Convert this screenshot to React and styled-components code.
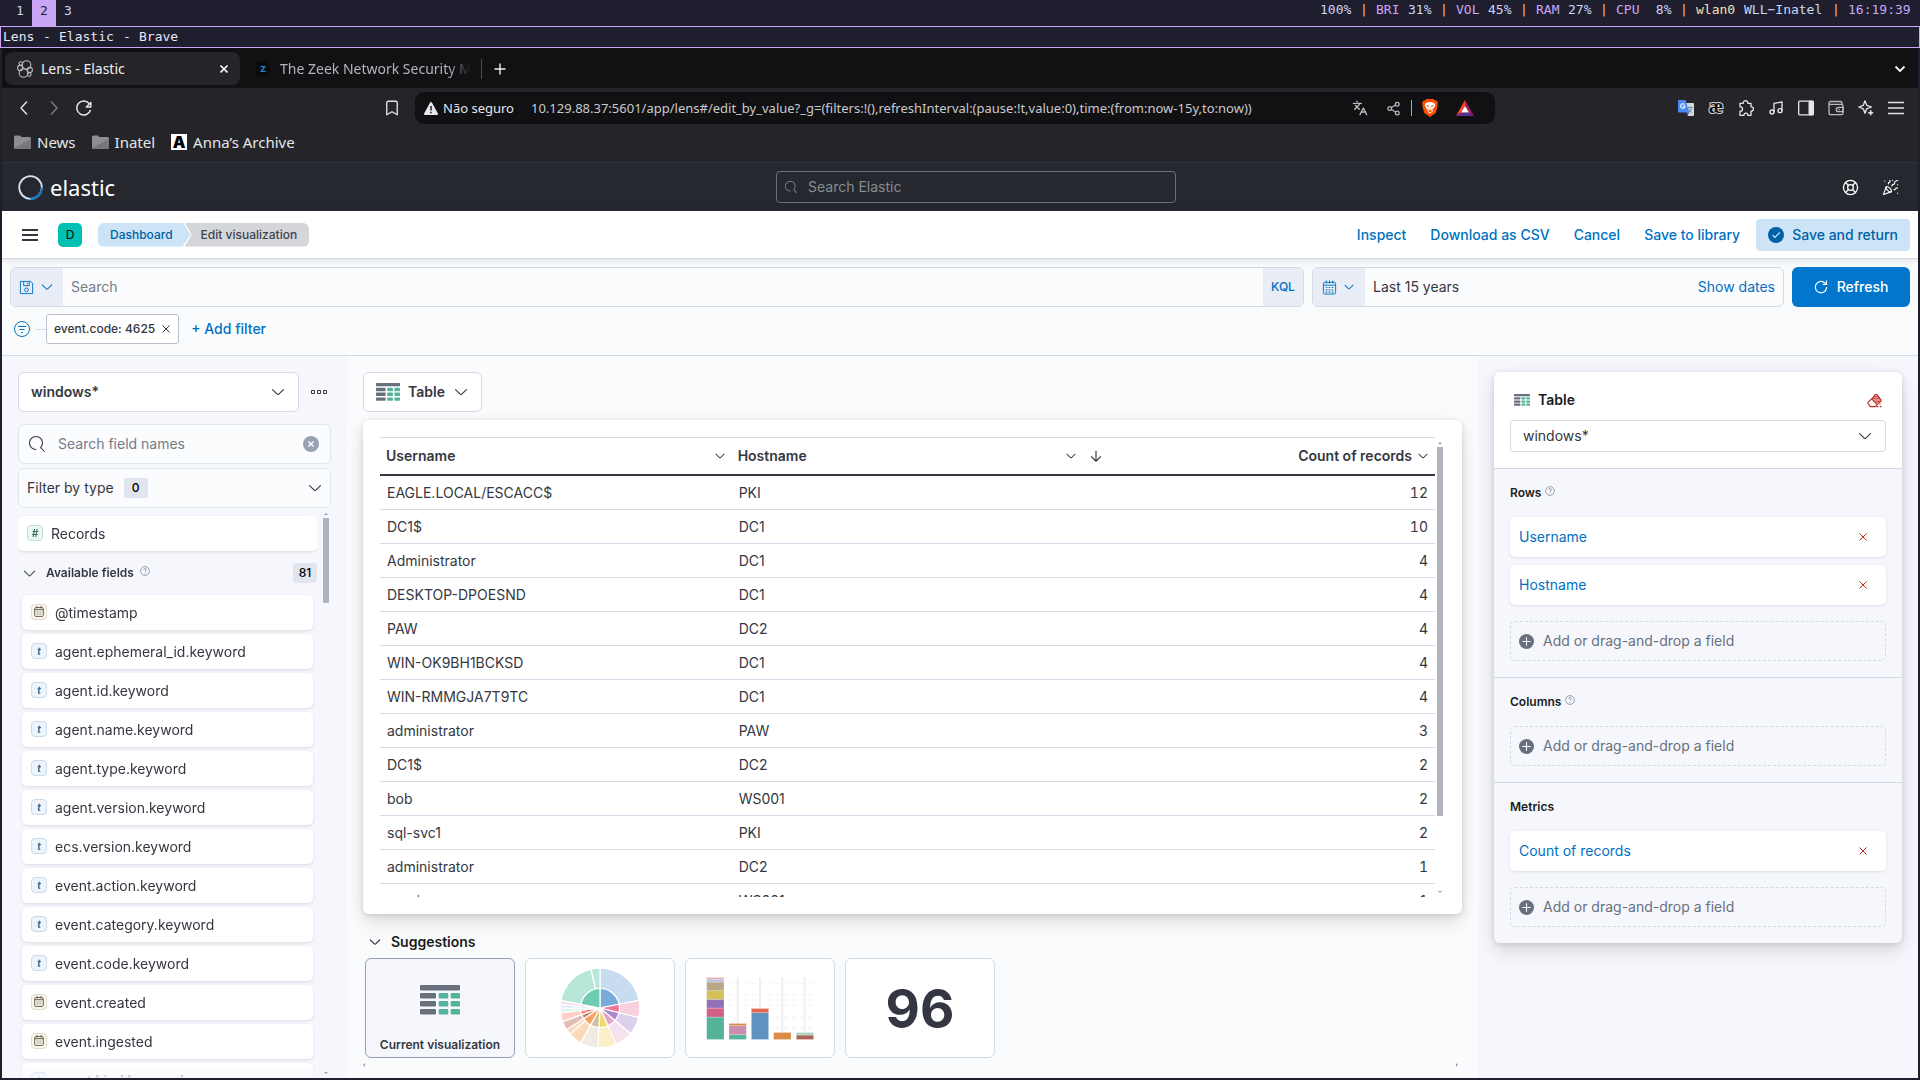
import React from "react";
import styled, { createGlobalStyle } from "styled-components";
import { Languages, Share2, Music, LifeBuoy, PartyPopper, Bookmark } from "lucide-react";

const UI = `"Inter", "Liberation Sans", sans-serif`;
const CHROME = `"Noto Sans", "Open Sans", sans-serif`;
const MONO = `"DejaVu Sans Mono", "Liberation Mono", monospace`;

const c = {
  night: "#1e1e2e",
  mauve: "#cba6f7",
  strip: "#111113",
  chrome: "#252529",
  header: "#25282f",
  ink: "#343741",
  strong: "#1a1c21",
  subdued: "#69707d",
  line: "#d3dae6",
  primary: "#0071c2",
  page: "#fafbfd",
  panel: "#f5f7fc",
  prepend: "#e9edf5",
  danger: "#bd271e",
};

const Global = createGlobalStyle`
  * { box-sizing: border-box; }
  body { margin: 0; background: ${c.night}; }
  button, input, select { font: inherit; color: inherit; margin: 0; }
  button { background: none; border: 0; padding: 0; cursor: pointer; white-space: nowrap; }
  svg { display: block; flex: none; }
  a { text-decoration: none; color: inherit; }
`;

/* ---------- desktop ---------- */
const Desktop = styled.div`
  display: flex;
  flex-direction: column;
  height: 100vh;
  overflow: hidden;
  background: ${c.night};
`;
const StatusBar = styled.div`
  display: flex;
  justify-content: space-between;
  flex: none;
  height: 26px;
  padding: 0 8px;
  font: 13px/20px ${MONO};
  color: #cdd6f4;
`;
const Workspaces = styled.nav`
  display: flex;
`;
const Workspace = styled.button`
  width: 24px;
  height: 26px;
  padding-bottom: 5px;
  background: ${(p) => (p.$active ? c.mauve : "transparent")};
  color: ${(p) => (p.$active ? c.night : "#cdd6f4")};
`;
const Stats = styled.div`
  display: flex;
  gap: 8px;
  white-space: pre;
`;
const tones = { text: "#cdd6f4", light: "#e8e8f4", key: c.mauve, bar: "#fab387", net: "#f9e2af" };
const Stat = styled.span`
  width: ${(p) => p.$chars * 8}px;
  color: ${(p) => tones[p.$tone]};
`;
const TitleBar = styled.div`
  flex: none;
  display: flex;
  gap: 8px;
  height: 22px;
  padding: 0 2px;
  border: 1px solid ${c.mauve};
  font: 13px/20px ${MONO};
`;
const Browser = styled.div`
  flex: 1;
  min-height: 0;
  margin: 0 2px 2px;
  display: flex;
  flex-direction: column;
`;

/* ---------- browser chrome ---------- */
const TabStrip = styled.div`
  flex: none;
  display: flex;
  align-items: center;
  height: 40px;
  padding: 1px 10px 0 3px;
  background: ${c.strip};
  color: #f0f0f2;
  font: 14px/20px ${CHROME};
`;
const Tab = styled.div`
  display: flex;
  align-items: center;
  gap: ${(p) => (p.$active ? 8 : 10)}px;
  width: ${(p) => (p.$active ? 235 : 241)}px;
  height: 33px;
  padding: ${(p) => (p.$active ? "0 12px" : "0 10px 0 16px")};
  border-radius: 8px;
  background: ${(p) => (p.$active ? c.chrome : "transparent")};
  color: ${(p) => (p.$active ? "#f0f0f2" : "#b4b4ba")};
`;
const TabText = styled.span`
  flex: 1;
  min-width: 0;
  overflow: hidden;
  white-space: nowrap;
  mask-image: ${(p) => (p.$fade ? "linear-gradient(90deg,#000 88%,transparent 100%)" : "none")};
`;
const TabRule = styled.span`
  width: 1px;
  height: 20px;
  background: #4a4a50;
  margin-right: 12px;
`;
const Push = styled.span`
  flex: 1;
`;
const Toolbar = styled.div`
  flex: none;
  display: grid;
  grid-template-columns: 413px minmax(0, 1fr) 423px;
  align-items: center;
  height: 40px;
  background: ${c.chrome};
  color: #e6e6ea;
`;
const NavGroup = styled.div`
  display: flex;
  align-items: center;
  gap: 14px;
  padding: 0 14px;
`;
const NavButton = styled.button`
  opacity: ${(p) => (p.$dim ? 0.45 : 1)};
`;
const AddressBar = styled.div`
  display: flex;
  align-items: center;
  height: 32px;
  padding: 0 21px 0 9px;
  border-radius: 9px;
  background: ${c.strip};
  font: 13px/20px ${CHROME};
`;
const Insecure = styled.span`
  padding: 0 17px 0 5px;
  white-space: nowrap;
`;
const Address = styled.input`
  flex: 1;
  min-width: 0;
  border: 0;
  padding: 0;
  background: none;
  outline: none;
  color: #c9c9ce;
`;
const AddressIcons = styled.div`
  display: flex;
  align-items: center;
  gap: 18px;
`;
const AddressRule = styled.span`
  width: 1px;
  height: 16px;
  background: #aaaaae;
  margin: 0 -8px;
`;
const Extensions = styled.div`
  display: flex;
  justify-content: flex-end;
  gap: 14px;
  padding-right: 14px;
`;
const Bookmarks = styled.nav`
  flex: none;
  display: flex;
  align-items: flex-start;
  gap: 16px;
  height: 35px;
  padding: 4px 12px;
  background: ${c.chrome};
  border-bottom: 1px solid #303238;
  color: #e6e6ea;
  font: 15px/20px ${CHROME};
`;
const BookmarkLink = styled.a`
  display: flex;
  align-items: center;
  gap: 6px;
`;
const AnnaMark = styled.span`
  width: 16px;
  height: 16px;
  background: #fff;
  color: #000;
  font: 900 16px/16px ${UI};
  text-align: center;
`;

/* ---------- elastic header ---------- */
const Kibana = styled.div`
  flex: 1;
  min-height: 0;
  display: flex;
  flex-direction: column;
  background: ${c.page};
  color: ${c.ink};
  font: 14px/20px ${UI};
`;
const Header = styled.header`
  flex: none;
  display: flex;
  align-items: center;
  justify-content: space-between;
  height: 48px;
  padding: 0 8px;
  background: ${c.header};
`;
const Brand = styled.a`
  display: flex;
  align-items: center;
  gap: 7px;
  width: 112px;
  padding-left: 8px;
  color: #fff;
  font: 22px/28px ${CHROME};
`;
const GlobalSearch = styled.label`
  display: flex;
  align-items: center;
  gap: 11px;
  width: 400px;
  height: 32px;
  padding: 0 8px;
  border: 1px solid #6b6e76;
  border-radius: 4px;
  color: #898c93;
`;
const PlainInput = styled.input`
  flex: 1;
  min-width: 0;
  border: 0;
  padding: 0;
  outline: none;
  background: transparent;
  &::placeholder { color: ${(p) => p.$hint || "#757b87"}; opacity: 1; }
`;
const HeaderIcons = styled.div`
  display: flex;
  color: #fff;
`;
const HeaderButton = styled.button`
  display: grid;
  place-items: center;
  width: 40px;
  height: 40px;
`;
const AppBar = styled.div`
  flex: none;
  position: relative;
  display: flex;
  align-items: center;
  height: 48px;
  padding: 0 8px 0 20px;
  background: #fff;
  border-bottom: 1px solid ${c.line};
  box-shadow: 0 1px 8px rgba(0, 0, 0, 0.13);
`;
const Space = styled.div`
  display: grid;
  place-items: center;
  width: 24px;
  height: 24px;
  margin: 0 16px 0 20px;
  border-radius: 5px;
  background: #00bfb3;
  color: #000;
  font-size: 12px;
`;
const Crumbs = styled.nav`
  display: flex;
  font: 500 12px/24px ${UI};
`;
const Crumb = styled.a`
  height: 24px;
  padding: ${(p) => (p.$last ? "0 12px 0 16px" : "0 18px 0 12px")};
  margin-left: ${(p) => (p.$last ? "-6px" : "0")};
  border-radius: ${(p) => (p.$last ? "0 6px 6px 0" : "6px 0 0 6px")};
  background: ${(p) => (p.$last ? "#d5d6d9" : "#cce4f5")};
  color: ${(p) => (p.$last ? "#404350" : "#0061a6")};
  clip-path: ${(p) =>
    p.$last ? "polygon(0 0,100% 0,100% 100%,0 100%,7px 50%)" : "polygon(0 0,calc(100% - 8px) 0,100% 50%,calc(100% - 8px) 100%,0 100%)"};
`;
const Actions = styled.div`
  display: flex;
  align-items: center;
  gap: 24px;
  margin-left: auto;
  color: ${c.primary};
  font-weight: 500;
`;
const SaveButton = styled.button`
  display: flex;
  align-items: center;
  gap: 8px;
  height: 32px;
  padding: 0 12px;
  margin-left: -8px;
  border-radius: 4px;
  background: #cce4f5;
  color: #0061a6;
  font-weight: 500;
`;

/* ---------- query bar ---------- */
const QueryArea = styled.section`
  flex: none;
  border-bottom: 1px solid ${c.line};
  padding: 8px 8px 11px;
`;
const QueryRow = styled.div`
  display: flex;
  gap: 8px;
`;
const Group = styled.div`
  display: flex;
  align-items: center;
  flex: ${(p) => (p.$width ? "none" : 1)};
  width: ${(p) => (p.$width ? p.$width + "px" : "auto")};
  height: 40px;
  border: 1px solid ${c.line};
  border-radius: 6px;
  background: #fbfcfd;
  overflow: hidden;
`;
const Prepend = styled.button`
  display: flex;
  align-items: center;
  justify-content: center;
  gap: 6px;
  width: 52px;
  height: 100%;
  padding-right: 2px;
  margin-right: 8px;
  background: ${c.prepend};
  color: ${c.primary};
`;
const Kql = styled.button`
  width: 40px;
  height: 100%;
  background: ${c.prepend};
  color: ${c.primary};
  font-size: 12px;
  font-weight: 500;
`;
const RangeButton = styled.button`
  flex: 1;
  text-align: left;
`;
const LinkButton = styled.button`
  color: ${c.primary};
  font-weight: ${(p) => p.$weight || 400};
  padding: ${(p) => p.$pad || 0};
`;
const Refresh = styled.button`
  display: flex;
  align-items: center;
  justify-content: center;
  gap: 9px;
  width: 118px;
  height: 40px;
  border-radius: 6px;
  background: #0077cc;
  color: #fff;
  font-weight: 500;
`;
const FilterRow = styled.div`
  display: flex;
  align-items: center;
  height: 30px;
  margin-top: 7px;
  padding-left: 4px;
`;
const FilterDash = styled.span`
  width: 10px;
  height: 1px;
  margin-left: 6px;
  background: ${c.line};
`;
const FilterPill = styled.div`
  display: flex;
  align-items: center;
  gap: 7px;
  height: 30px;
  padding: 0 8px 0 7px;
  margin-right: 12px;
  border: 1px solid #b9c0cd;
  border-radius: 3px;
  background: #fff;
  font-size: 12px;
  font-weight: 500;
`;

/* ---------- body ---------- */
const Body = styled.main`
  flex: 1;
  min-height: 0;
  display: grid;
  grid-template-columns: 345px minmax(0, 1fr) 440px;
`;
const Side = styled.aside`
  display: flex;
  flex-direction: column;
  min-height: 0;
  padding: 16px 16px 0;
  background: ${c.panel};
`;
const SourceRow = styled.div`
  display: flex;
  align-items: center;
  gap: 12px;
  margin-bottom: 12px;
`;
const SelectBox = styled.label`
  flex: 1;
  display: flex;
  align-items: center;
  height: ${(p) => p.$height}px;
  padding: 0 12px;
  border: 1px solid ${c.line};
  border-radius: ${(p) => (p.$height > 32 ? 6 : 4)}px;
  background: #fff;
`;
const Select = styled.select`
  flex: 1;
  min-width: 0;
  border: 0;
  outline: none;
  appearance: none;
  background: transparent;
  padding: 0;
  font-weight: ${(p) => (p.$bold ? 600 : 400)};
`;
const FieldSearch = styled.label`
  flex: none;
  display: flex;
  align-items: center;
  gap: 13px;
  height: 40px;
  padding: 0 11px 0 10px;
  border: 1px solid #e1e6f0;
  border-radius: 6px;
  background: #fbfcfd;
`;
const ClearButton = styled.button`
  display: grid;
  place-items: center;
  width: 16px;
  height: 16px;
  border-radius: 50%;
  background: #98a2b3;
  color: #fff;
`;
const TypeFilter = styled.button`
  flex: none;
  display: flex;
  align-items: center;
  gap: 10px;
  height: 40px;
  margin: 4px 0;
  padding: 0 7px 0 8px;
  border: 1px solid #e1e6f0;
  border-radius: 6px;
  background: #fbfcfd;
`;
const Badge = styled.span`
  min-width: 24px;
  height: 20px;
  margin-right: ${(p) => (p.$push ? "auto" : "0")};
  border-radius: 3px;
  background: #e0e5ee;
  color: #000;
  font-size: 12px;
  font-weight: 500;
  text-align: center;
`;
const FieldArea = styled.div`
  flex: 1;
  min-height: 0;
  display: flex;
  gap: 6px;
  overflow: hidden;
  margin-right: 2px;
`;
const FieldScroll = styled.div`
  flex: 1;
  min-width: 0;
  padding-top: 4px;
  overflow: hidden;
  mask-image: linear-gradient(180deg, #000 calc(100% - 12px), rgba(0, 0, 0, 0.2) 100%);
`;
const Rail = styled.div`
  display: flex;
  flex-direction: column;
  align-items: center;
  width: 6px;
  height: 100%;
  padding: ${(p) => p.$pad};
`;
const Thumb = styled.div`
  width: 6px;
  height: ${(p) => p.$size};
  margin: 3px 0 auto;
  background: #afb4be;
`;
const Caret = styled.i`
  border: 2px solid transparent;
  border-${(p) => (p.$dir === "up" ? "bottom" : "top")}-color: #9a9fa9;
  border-${(p) => (p.$dir === "up" ? "top" : "bottom")}-width: 0;
`;
const FieldItem = styled.button`
  display: flex;
  align-items: center;
  gap: 8px;
  width: 100%;
  height: 35px;
  padding: 0 9px;
  border-radius: 5px;
  background: #fff;
  box-shadow: 0 1px 3px rgba(40, 50, 70, 0.14);
`;
const Token = styled.span`
  display: grid;
  place-items: center;
  width: 16px;
  height: 16px;
  margin-bottom: 2px;
  border: 1px solid ${(p) => p.$tone.line};
  border-radius: 4px;
  background: ${(p) => p.$tone.fill};
  color: ${(p) => p.$tone.ink};
  font: italic 700 10px/14px ${UI};
`;
const GroupHead = styled.div`
  display: flex;
  align-items: center;
  height: 44px;
  padding-left: 4px;
  font-size: 12px;
  font-weight: 600;
`;
const HeadLabel = styled.span`
  margin: 0 6px 0 9px;
`;
const Help = styled.span`
  margin-bottom: 5px;
  color: #8b92a0;
`;
const FieldList = styled.div`
  display: flex;
  flex-direction: column;
  gap: 4px;
  padding: 0 4px;
`;
const BadgeEnd = styled.span`
  margin-left: auto;
  display: flex;
`;

/* ---------- workspace ---------- */
const Center = styled.section`
  display: flex;
  flex-direction: column;
  min-height: 0;
  padding: 16px 16px 0;
`;
const ChartSwitch = styled.button`
  align-self: flex-start;
  display: flex;
  align-items: center;
  gap: 8px;
  width: 119px;
  height: 40px;
  padding: 0 12px;
  border: 1px solid ${c.line};
  border-radius: 6px;
  background: #fff;
  font-weight: 600;
`;
const deep = `0 1px 5px rgba(0,0,0,.1), 0 4px 13px rgba(0,0,0,.07), 0 7px 23px rgba(0,0,0,.05), 0 12px 20px rgba(0,0,0,.04)`;
const ChartPanel = styled.div`
  flex: 1;
  min-height: 0;
  display: flex;
  gap: 2px;
  margin-top: 8px;
  padding: 17px 19px 17px 17px;
  border-radius: 6px;
  background: #fff;
  box-shadow: ${deep};
`;
const TableClip = styled.div`
  flex: 1;
  min-width: 0;
  overflow: hidden;
`;
const DataTable = styled.table`
  width: 100%;
  table-layout: fixed;
  border-collapse: separate;
  border-spacing: 0;
`;
const Th = styled.th`
  height: 39px;
  padding: 0 6px;
  border-top: 1px solid ${c.line};
  border-bottom: 2px solid ${c.ink};
  text-align: left;
  font-weight: 600;
`;
const ThInner = styled.div`
  display: flex;
  align-items: center;
  justify-content: space-between;
  gap: 4px;
`;
const ThEnd = styled.span`
  display: flex;
  align-items: center;
  gap: 5px;
`;
const Td = styled.td`
  height: 34px;
  padding: 0 7px;
  border-bottom: 1px solid ${c.line};
  text-align: ${(p) => (p.$num ? "right" : "left")};
  font-feature-settings: ${(p) => (p.$num ? '"tnum" 1' : "normal")};
`;
const SuggestHead = styled.div`
  display: flex;
  align-items: center;
  gap: 9px;
  height: 44px;
  padding: 12px 5px 0;
  color: ${c.strong};
  font-weight: 600;
`;
const Suggestions = styled.div`
  flex: none;
  display: flex;
  gap: 10px;
  padding: 0 2px;
`;
const Card = styled.button`
  display: flex;
  flex-direction: column;
  align-items: center;
  justify-content: ${(p) => (p.$current ? "flex-end" : "center")};
  gap: 20px;
  width: 150px;
  height: 100px;
  padding-bottom: ${(p) => (p.$current ? "2px" : "0")};
  border: 1px solid ${(p) => (p.$current ? "#98a2b3" : c.line)};
  border-radius: 6px;
  background: ${(p) => (p.$current ? c.panel : "#fff")};
  font-size: 12px;
  font-weight: 600;
`;
const Metric = styled.span`
  padding-top: 2px;
  font: 700 53px/60px ${UI};
`;
const HRail = styled.div`
  flex: none;
  display: flex;
  justify-content: space-between;
  height: 20px;
  padding: 5px 4px 0 0;
`;
const SideCaret = styled.i`
  height: 4px;
  border: 2px solid transparent;
  border-${(p) => (p.$dir === "left" ? "right" : "left")}-color: #9a9fa9;
  border-${(p) => p.$dir}-width: 0;
`;

/* ---------- config panel ---------- */
const ConfigWrap = styled.aside`
  padding: 16px;
  background: ${c.panel};
`;
const Config = styled.div`
  border-radius: 6px;
  background: ${c.panel};
  box-shadow: ${deep};
  overflow: hidden;
`;
const ConfigHead = styled.div`
  padding: 16px;
  background: #fff;
`;
const ConfigTitle = styled.div`
  display: flex;
  align-items: center;
  gap: 8px;
  height: 24px;
  padding: 0 4px;
  margin-bottom: 8px;
  color: ${c.strong};
  font-weight: 600;
`;
const Erase = styled.button`
  margin-left: auto;
  color: ${c.danger};
`;
const Layer = styled.section`
  padding: 16px;
  border-top: 1px solid ${c.line};
`;
const LayerLabel = styled.h3`
  display: flex;
  align-items: center;
  gap: 4px;
  height: 16px;
  margin: 0 0 16px;
  color: ${c.strong};
  font-size: 12px;
  font-weight: 600;
`;
const Dimension = styled.div`
  display: flex;
  align-items: center;
  justify-content: space-between;
  height: 40px;
  margin-bottom: ${(p) => (p.$last ? 16 : 8)}px;
  padding: 0 19px 0 9px;
  border-radius: 5px;
  background: #fff;
  box-shadow: 0 1px 3px rgba(40, 50, 70, 0.12);
`;
const RemoveButton = styled.button`
  color: ${c.danger};
`;
const DropZone = styled.button`
  display: flex;
  align-items: center;
  gap: 9px;
  width: 100%;
  height: 40px;
  padding: 0 8px;
  border: 1px dashed ${c.line};
  border-radius: 5px;
  color: ${c.subdued};
`;

/* ---------- icons ---------- */
const Chevron = ({ size = 16 }) => (
  <svg width={size} height={size} viewBox="0 0 16 16" fill="currentColor">
    <path d="M13.069 5.157 8.384 9.768a.546.546 0 0 1-.768 0L2.93 5.158a.552.552 0 0 0-.771 0 .53.53 0 0 0 0 .759l4.684 4.61a1.65 1.65 0 0 0 2.312 0l4.684-4.61a.53.53 0 0 0 0-.76.552.552 0 0 0-.771 0Z" />
  </svg>
);
const Lens = ({ size = 16 }) => (
  <svg width={size} height={size} viewBox="0 0 16 16" fill="currentColor">
    <path d="M11.271 11.978l3.872 3.873a.502.502 0 0 0 .708 0 .502.502 0 0 0 0-.708l-3.565-3.564c2.38-2.747 2.267-6.923-.342-9.532-2.73-2.73-7.17-2.73-9.898 0-2.728 2.729-2.728 7.17 0 9.9a6.955 6.955 0 0 0 4.949 2.05.5.5 0 0 0 0-1 5.96 5.96 0 0 1-4.242-1.757 6.01 6.01 0 0 1 0-8.486 6.004 6.004 0 0 1 8.484 0 6.01 6.01 0 0 1 0 8.486.5.5 0 0 0 .034.738z" />
  </svg>
);
const Line = ({ size = 16, w = 1, d, box = 16 }) => (
  <svg width={size} height={size} viewBox={`0 0 ${box} ${box}`} fill="none" stroke="currentColor" strokeWidth={w} strokeLinejoin="round">
    <path d={d} />
  </svg>
);
const Cross = ({ size = 8, w = 1 }) => <Line size={size} box={8} w={w} d="M.5.5l7 7M7.5.5l-7 7" />;
const Question = () => (
  <svg width="10" height="10" viewBox="0 0 16 16" fill="none" stroke="currentColor" strokeWidth="1.4">
    <circle cx="8" cy="8" r="7" />
    <path d="M5.8 6.2c0-1.3 1-2.1 2.2-2.1s2.2.8 2.2 2c0 1.7-2.2 1.7-2.2 3.4M8 11v1.4" />
  </svg>
);
const TableIcon = ({ width }) => (
  <svg width={width} height={(width * 3) / 4} viewBox="0 0 30 22.5">
    <rect width="30" height="4.2" rx=".8" fill="#69707d" />
    {[6, 12, 18].map((y) => (
      <g key={y}>
        <rect y={y} width="12" height="4.2" rx=".8" fill="#69707d" />
        <rect x="14" y={y} width="7.2" height="4.2" rx=".8" fill="#54b399" />
        <rect x="23" y={y} width="7" height="4.2" rx=".8" fill="#54b399" />
      </g>
    ))}
  </svg>
);
const Plus = () => (
  <svg width="15" height="15" viewBox="0 0 16 16">
    <circle cx="8" cy="8" r="8" fill="#69707d" />
    <path d="M8 3.5v9M3.5 8h9" stroke="#fff" strokeWidth="1.1" />
  </svg>
);
const Calendar = ({ size }) => (
  <svg width={size} height={size} viewBox="0 0 16 16" fill="none" stroke="currentColor">
    <rect x="1.5" y="2.5" width="13" height="12.5" rx="1.5" />
    <path d="M1.5 5.5h13M4.5.5v3M8 .5v3M11.5.5v3" />
    <path d="M4 8h8M4 10.5h8M4 13h8" strokeWidth="1.3" strokeDasharray="1.6 1.6" />
  </svg>
);
const DateToken = () => (
  <svg width="10" height="11" viewBox="0 0 10 11" fill="none" stroke="currentColor">
    <rect x=".7" y="1.6" width="8.6" height="8.8" rx="1" />
    <path d="M.7 3.7h8.6M3 0v2.4M7 0v2.4" />
    <path d="M3.2 5v4M5 5v4M6.8 5v4" strokeWidth=".7" opacity=".6" />
  </svg>
);
const EraserIcon = () => (
  <svg width="15" height="15" viewBox="0 0 16 16" fill="none" stroke="currentColor" strokeWidth="1.2" strokeLinejoin="round">
    <path d="M7 4.500 1.500 9.500a1.500 1.500 0 0 0-.2 2L3.500 14.500h5l6-5.300a1.500 1.500 0 0 0 .1-2.200L10.500 1.800a1.500 1.500 0 0 0-2 .1L5.500 6.800l5.300 5.500" />
    <path d="M7.500 3.500h4.500M6.500 5.500h7.500M7 7.500h8M8.500 9.500h5.500" />
    <path d="M10 14.500h2M13.500 14.500h2M13.500 12h1" />
  </svg>
);
const PuzzleIcon = () => (
  <Line w={1.3} d="M2 3.300h3.200V3a2.300 2.300 0 1 1 4.600 0v.3H13v3.500h.3a2.200 2.200 0 0 1 0 4.400H13V15.300H9.800V15a1.900 1.900 0 0 0-3.800 0v.3H2v-4.100h.3a2.200 2.200 0 0 0 0-4.400H2z" />
);
const WalletIcon = () => (
  <svg width="16" height="16" viewBox="0 0 16 16" fill="none" stroke="#b9b9be" strokeWidth="1.3">
    <path d="M1 3v10a1.700 1.700 0 0 0 1.700 1.700h10.600A1.700 1.700 0 0 0 15 13V6a1.700 1.700 0 0 0-1.700-1.700H2.500A1.400 1.400 0 0 1 1 3a1.500 1.500 0 0 1 1.500-1.500h10a1.500 1.500 0 0 1 1.500 1.500v1.300" />
    <path d="M15 7.300h-4.500a2 2 0 0 0 0 4.400H15z" />
    <path d="M10.500 9.500h1.200" />
  </svg>
);
const LeoSparkle = () => (
  <svg width="16" height="16" viewBox="0 0 16 16" fill="none" stroke="#e6e6ea" strokeWidth="1.3" strokeLinejoin="round">
    <path d="M7 .8 8.700 5.300 13.500 7 8.700 8.800 7 13.300 5.300 8.800.8 7l4.500-1.700z" />
    <path d="M12.700 10.200v5M10.200 12.700h5" strokeWidth="1.6" />
  </svg>
);
const Folder = () => (
  <svg width="17" height="14" viewBox="0 0 17 14">
    <path d="M0 2a1.500 1.500 0 0 1 1.500-1.500h4.500l1.500 1.500h8a1.500 1.500 0 0 1 1.500 1.500v9a1.500 1.500 0 0 1-1.500 1.500h-14a1.500 1.500 0 0 1-1.500-1.500z" fill="#8d8d92" />
    <path d="M0 13 17 4v8.500a1.500 1.500 0 0 1-1.500 1.500h-14z" fill="#77777c" />
  </svg>
);
const Warning = () => (
  <svg width="14" height="13" viewBox="0 0 14 13">
    <path d="M7 0a1 1 0 0 1 .9.500l6 11A1 1 0 0 1 13 13H1a1 1 0 0 1-.9-1.500l6-11A1 1 0 0 1 7 0z" fill="#e6e6ea" />
    <path d="M7 4v4.500M7 9.700v1.500" stroke="#111113" strokeWidth="1.4" />
  </svg>
);
const Cluster = () => (
  <svg width="16" height="18" viewBox="0 0 16 18" fill="none" stroke="#b9b9be" strokeWidth="1.100">
    <circle cx="9.500" cy="5" r="4.300" />
    <circle cx="6.500" cy="13" r="4.300" />
    <circle cx="3.200" cy="8" r="2.600" />
    <circle cx="12.800" cy="10" r="2.600" />
    <circle cx="3.800" cy="3.600" r="1.800" />
    <circle cx="12.300" cy="14.500" r="1.800" />
  </svg>
);
const ElasticRing = () => (
  <svg width="25" height="25" viewBox="0 0 25 25" fill="none" strokeWidth="1.800">
    <circle cx="12.500" cy="12.500" r="11.300" stroke="#d5e2ee" />
    <path d="M23.800 12.500A11.300 11.300 0 0 1 12.500 23.800" stroke="#0077cc" />
  </svg>
);
const BraveLion = () => (
  <svg width="16" height="18" viewBox="0 0 16 18">
    <path d="M4.500 0h7l1.500 1.600 1.500-.1 1.500 2.300-.6 2 .3 1-2 7.200L8 18l-5.700-4L.3 6.800l.3-1-.6-2 1.500-2.300 1.500.1z" fill="#ff4f00" />
    <path d="M5 3.500 8 3l3 .5 1.900 1.300.3 2-2.200 3.200-1 .4 1 1.600L8 14.800 5 12l1-1.600-1-.4-2.200-3.200.3-2z" fill="#fff" />
    <path d="M4.500 6.300l2.500.9-.8.9zM11.500 6.300 9 7.200l.8.9zM8 8.800v2.400M6 12l2-1 2 1-2 1.200z" fill="#ff4f00" stroke="#ff4f00" strokeWidth=".5" />
  </svg>
);
const BatTriangle = () => (
  <svg width="18" height="16" viewBox="0 0 18 16">
    <path d="M9 0v6L5 12.500 0 16z" fill="#ff4724" />
    <path d="M9 0v6l4 6.500 5 3.500z" fill="#9e1f63" />
    <path d="M0 16l5-3.500h8l5 3.500z" fill="#662d91" />
    <path d="M9 6l4 6.500H5z" fill="#fff" />
  </svg>
);
const GTranslate = () => (
  <svg width="16" height="16" viewBox="0 0 16 16">
    <path d="M6 3h9a1 1 0 0 1 1 1v11a1 1 0 0 1-1 1H10z" fill="#d5d8dc" />
    <path d="M9.500 7.500h5M12 6.500v1M14 7.500c-.5 2-2 3.800-3.500 4.700M10.500 8.500c.8 2 2 3.200 3.500 4" fill="none" stroke="#6c8a9c" />
    <path d="M0 1a1 1 0 0 1 1-1h6.500l3.800 12.500H1a1 1 0 0 1-1-1z" fill="#4a8af4" />
    <path d="M8 12.500h3.300L9.500 16z" fill="#3556b8" />
    <path d="M6.500 4.600A2.200 2.200 0 1 0 7 6.300H4.900" fill="none" stroke="#fff" strokeWidth="1.100" />
  </svg>
);
const AeMark = styled.span`
  width: 16px;
  display: flex;
  justify-content: center;
  color: #111113;
  font: 700 20px/12px "Liberation Serif", serif;
  -webkit-text-stroke: 2px #d8d8dc;
  paint-order: stroke fill;
`;
const SidebarIcon = () => (
  <svg width="16" height="16" viewBox="0 0 16 16" fill="none" stroke="#e6e6ea">
    <rect x=".7" y="1.200" width="14.600" height="13.600" rx="1" strokeWidth="1.300" />
    <path d="M11 1.200h4.300v13.600H11z" fill="#e6e6ea" />
  </svg>
);
const ZeekMark = styled.span`
  width: 14px;
  color: #1a8ac6;
  background: #0a0a0b;
  border-radius: 4px;
  font: 600 11px/15px ${UI};
  text-align: center;
`;

const ring = (r0, r1, a, b) => {
  const p = (r, t) => {
    const k = ((t - 90) * Math.PI) / 180;
    return `${(40 + r * Math.cos(k)).toFixed(2)} ${(40 + r * Math.sin(k)).toFixed(2)}`;
  };
  return `M${p(r0, a)}L${p(r1, a)}A${r1} ${r1} 0 0 1 ${p(r1, b)}L${p(r0, b)}A${r0} ${r0} 0 0 0 ${p(r0, a)}Z`;
};
const innerSlices = [
  [0, 79, "#79aad9"], [79, 104, "#ee789d"], [104, 130, "#a987d1"], [130, 156, "#e4a6c7"], [156, 183, "#f1d86f"],
  [183, 209, "#d2c0a0"], [209, 237, "#f5a35c"], [237, 250, "#c47c6c"], [250, 263, "#ff7e62"], [263, 269, "#a8e6d8"],
  [269, 275, "#b0cfee"], [275, 281, "#f9b6cc"], [281, 360, "#6dccb1"],
];
const outerSlices = [
  [0, 79, "#c7dcef"], [79, 104, "#f9d0de"], [104, 130, "#ddd0ed"], [130, 156, "#f6e2ee"], [156, 183, "#faefc8"],
  [183, 209, "#f1ebe3"], [209, 229, "#fbdabc"], [229, 237, "#fbdabc"], [237, 250, "#e2beb7"], [250, 263, "#ffd0c6"],
  [263, 270, "#dff6f0"], [270, 275, "#d9e8f7"], [275, 281, "#fbdde6"], [281, 347, "#b8e6d9"], [347, 360, "#b8e6d9"],
];
const Pie = () => (
  <svg width="80" height="80" viewBox="0 0 80 80" stroke="#fff" strokeWidth="1.200">
    {outerSlices.map(([a, b, f]) => <path key={a} d={ring(19.5, 39.8, a, b)} fill={f} />)}
    {innerSlices.map(([a, b, f]) => <path key={a} d={ring(0, 19.5, a, b)} fill={f} />)}
  </svg>
);
const barStacks = [
  [530, [[51, 58, "#e8a9c4"], [58, 65, "#a9c5e0"], [65, 91, "#b9a888"], [91, 117, "#d6bf57"], [117, 143, "#9170b8"], [143, 170, "#d36086"], [170, 237, "#54b399"]]],
  [597, [[189, 196, "#da8b45"], [196, 223, "#ca8eae"], [223, 237, "#54b399"]]],
  [664, [[144, 157, "#e7664c"], [157, 237, "#6092c0"]]],
  [731, [[216, 237, "#da8b45"]]],
  [799, [[216, 224, "#a9d6c8"], [224, 237, "#aa6556"]]],
];
const Bars = () => (
  <svg width="108" height="63" viewBox="528 50 324 188">
    {[623, 690, 757, 824].map((x) => <path key={x} d={`M${x} 50V237`} stroke="#eeeff4" strokeWidth="6" />)}
    {[70, 103, 136, 170, 203].map((y) => <path key={y} d={`M594 ${y}H848`} stroke="#f0f1f5" strokeWidth="3" strokeDasharray="12 12" />)}
    {barStacks.map(([x, parts]) =>
      parts.map(([a, b, f]) => <rect key={x + "-" + a} x={x} y={a} width="52" height={b - a} fill={f} stroke="#fff" strokeOpacity=".35" strokeWidth="2" />)
    )}
  </svg>
);

/* ---------- data ---------- */
const stats = [
  ["100%", "text"], ["|", "bar"], ["BRI", "key"], ["31%", "text"], ["|", "bar"], ["VOL", "key"], ["45%", "text"], ["|", "bar"],
  ["RAM", "key"], ["27%", "text"], ["|", "bar"], ["CPU", "key"], [" 8%", "text"], ["|", "bar"], ["wlan0", "net"],
  ["WLL−Inatel", "text"], ["|", "bar"], ["16:19:39", "key"],
];
const fields = [
  ["@timestamp", "date"], ["agent.ephemeral_id.keyword", "text"], ["agent.id.keyword", "text"], ["agent.name.keyword", "text"],
  ["agent.type.keyword", "text"], ["agent.version.keyword", "text"], ["ecs.version.keyword", "text"], ["event.action.keyword", "text"],
  ["event.category.keyword", "text"], ["event.code.keyword", "text"], ["event.created", "date"], ["event.ingested", "date"],
  ["event.kind.keyword", "text"],
];
const tokenTones = {
  date: { fill: "#f8f6f1", line: "#e4dccb", ink: "#6b5f45" },
  text: { fill: "#eef4fa", line: "#c9dbec", ink: "#3f6b94" },
  number: { fill: "#ecf7f4", line: "#bfe2d8", ink: "#387765" },
};
const rows = [
  ["EAGLE.LOCAL/ESCACC$", "PKI", 12], ["DC1$", "DC1", 10], ["Administrator", "DC1", 4], ["DESKTOP-DPOESND", "DC1", 4],
  ["PAW", "DC2", 4], ["WIN-OK9BH1BCKSD", "DC1", 4], ["WIN-RMMGJA7T9TC", "DC1", 4], ["administrator", "PAW", 3],
  ["DC1$", "DC2", 2], ["bob", "WS001", 2], ["sql-svc1", "PKI", 2], ["administrator", "DC2", 1], ["svc-iam", "WS001", 1],
];
const layers = [
  { label: "Rows", help: true, dims: ["Username", "Hostname"] },
  { label: "Columns", help: true, dims: [] },
  { label: "Metrics", help: false, dims: ["Count of records"] },
];

const Field = ({ name, kind }) => (
  <FieldItem>
    <Token $tone={tokenTones[kind]}>{kind === "date" ? <DateToken /> : kind === "text" ? "t" : "#"}</Token>
    {name}
  </FieldItem>
);

export default function App() {
  return (
    <Desktop>
      <Global />
      <StatusBar>
        <Workspaces>
          {[1, 2, 3].map((n) => <Workspace key={n} $active={n === 2}>{n}</Workspace>)}
        </Workspaces>
        <Stats>
          {stats.map(([t, tone], i) => <Stat key={i} $chars={t.length} $tone={tone}>{t}</Stat>)}
        </Stats>
      </StatusBar>
      <TitleBar>
        {["Lens", "-", "Elastic", "-", "Brave"].map((w, i) => <Stat key={i} $chars={w.length} $tone="light">{w}</Stat>)}
      </TitleBar>

      <Browser>
        <TabStrip>
          <Tab $active>
            <Cluster />
            <TabText>Lens - Elastic</TabText>
            <button aria-label="Close tab"><Cross w={1.6} /></button>
          </Tab>
          <Tab>
            <ZeekMark>z</ZeekMark>
            <TabText $fade>The Zeek Network Security M</TabText>
          </Tab>
          <TabRule />
          <button aria-label="New tab"><Line size={12} box={12} w={1.4} d="M6 .5v11M.5 6h11" /></button>
          <Push />
          <button aria-label="Tab list"><Line size={16} w={1.8} d="M3.500 5.500 8 10l4.500-4.500" /></button>
        </TabStrip>
        <Toolbar>
          <NavGroup>
            <NavButton aria-label="Back"><Line w={1.4} d="M11 1.500 5 8l6 6.500" /></NavButton>
            <NavButton $dim aria-label="Forward"><Line w={1.4} d="M5 1.500 11 8l-6 6.500" /></NavButton>
            <NavButton aria-label="Reload"><Line w={1.5} d="M14.500 10A7 7 0 1 1 13.500 4M14.800 2.500v4.500h-4.500z" /></NavButton>
            <Push />
            <NavButton aria-label="Bookmark"><Bookmark size={18} strokeWidth={1.8} /></NavButton>
          </NavGroup>
          <AddressBar>
            <Warning />
            <Insecure>Não seguro</Insecure>
            <Address aria-label="Address" readOnly value="10.129.88.37:5601/app/lens#/edit_by_value?_g=(filters:!(),refreshInterval:(pause:!t,value:0),time:(from:now-15y,to:now))" />
            <AddressIcons>
              <Languages size={16} color="#b9b9be" />
              <Share2 size={15} color="#b9b9be" />
              <AddressRule />
              <BraveLion />
              <BatTriangle />
            </AddressIcons>
          </AddressBar>
          <Extensions>
            <GTranslate />
            <AeMark>æ</AeMark>
            <PuzzleIcon />
            <Music size={16} />
            <SidebarIcon />
            <WalletIcon />
            <LeoSparkle />
            <Line w={1.4} d="M0 2.500h16M0 8h16M0 13.500h16" />
          </Extensions>
        </Toolbar>
        <Bookmarks>
          <BookmarkLink href="#news"><Folder />News</BookmarkLink>
          <BookmarkLink href="#inatel"><Folder />Inatel</BookmarkLink>
          <BookmarkLink href="#anna"><AnnaMark>A</AnnaMark>Anna’s Archive</BookmarkLink>
        </Bookmarks>

        <Kibana>
          <Header>
            <Brand href="#home"><ElasticRing />elastic</Brand>
            <GlobalSearch>
              <Lens size={12} />
              <PlainInput aria-label="Search Elastic" placeholder="Search Elastic" $hint="#898c93" />
            </GlobalSearch>
            <HeaderIcons>
              <HeaderButton aria-label="Help"><LifeBuoy size={17} strokeWidth={1.8} /></HeaderButton>
              <HeaderButton aria-label="News"><PartyPopper size={17} strokeWidth={1.6} /></HeaderButton>
            </HeaderIcons>
          </Header>
          <AppBar>
            <button aria-label="Menu"><Line w={2} d="M0 3h16M0 8h16M0 13h16" /></button>
            <Space>D</Space>
            <Crumbs>
              <Crumb href="#dashboard">Dashboard</Crumb>
              <Crumb $last>Edit visualization</Crumb>
            </Crumbs>
            <Actions>
              <button>Inspect</button>
              <button>Download as CSV</button>
              <button>Cancel</button>
              <button>Save to library</button>
              <SaveButton>
                <svg width="16" height="16" viewBox="0 0 16 16"><circle cx="8" cy="8" r="8" fill="#0061a6" /><path d="M4.500 8.200 7 10.500l4.700-5" fill="none" stroke="#cce4f5" strokeWidth="1.200" /></svg>
                Save and return
              </SaveButton>
            </Actions>
          </AppBar>

          <QueryArea>
            <QueryRow>
              <Group>
                <Prepend aria-label="Saved queries">
                  <Line size={15} box={16} d="M1.500 1.500h11l2 2v11h-13zM5 1.500v4.500h6v-4.500M9 3v1.500M10 10.500a2 2 0 1 0-4 0 2 2 0 1 0 4 0" />
                  <Chevron size={14} />
                </Prepend>
                <PlainInput aria-label="Search" placeholder="Search" />
                <Kql>KQL</Kql>
              </Group>
              <Group $width={472}>
                <Prepend aria-label="Quick select"><Calendar size={15} /><Chevron size={12} /></Prepend>
                <RangeButton>Last 15 years</RangeButton>
                <LinkButton $pad="0 8px">Show dates</LinkButton>
              </Group>
              <Refresh><Line size={14} box={16} w={1.300} d="M14.500 8A6.500 6.500 0 1 1 12 3l2.200 1.800M14.300.5v4.500H10" />Refresh</Refresh>
            </QueryRow>
            <FilterRow>
              <LinkButton aria-label="Filter options"><Line size={16} d="M15.500 8A7.500 7.500 0 1 1 .5 8a7.500 7.500 0 1 1 15 0M4 5.500h8M5.500 8.500h5M7 11.500h2" /></LinkButton>
              <FilterDash />
              <FilterPill>event.code: 4625 <button aria-label="Remove filter"><Cross /></button></FilterPill>
              <LinkButton $weight={500}>+ Add filter</LinkButton>
            </FilterRow>
          </QueryArea>

          <Body>
            <Side>
              <SourceRow>
                <SelectBox $height={40}>
                  <Select $bold aria-label="Data view"><option>windows*</option></Select>
                  <Chevron />
                </SelectBox>
                <button aria-label="More">
                  <svg width="20" height="16" viewBox="0 0 20 16" fill="none" stroke="currentColor"><path d="M.5 6.500h3v3h-3zM6.500 6.500h3v3h-3zM12.500 6.500h3v3h-3z" /></svg>
                </button>
              </SourceRow>
              <FieldSearch>
                <Lens />
                <PlainInput aria-label="Search field names" placeholder="Search field names" />
                <ClearButton aria-label="Clear"><Cross size={6} w={1.800} /></ClearButton>
              </FieldSearch>
              <TypeFilter>Filter by type <Badge $push>0</Badge><Chevron /></TypeFilter>
              <FieldArea>
                <FieldScroll>
                  <Field name="Records" kind="number" />
                  <GroupHead>
                    <Chevron size={15} />
                    <HeadLabel>Available fields</HeadLabel>
                    <Help><Question /></Help>
                    <BadgeEnd><Badge>81</Badge></BadgeEnd>
                  </GroupHead>
                  <FieldList>
                    {fields.map(([n, k]) => <Field key={n} name={n} kind={k} />)}
                  </FieldList>
                </FieldScroll>
                <Rail $pad="1px 0 4px"><Caret $dir="up" /><Thumb $size="85px" /><Caret $dir="down" /></Rail>
              </FieldArea>
            </Side>

            <Center>
              <ChartSwitch><TableIcon width={24} />Table<Chevron /></ChartSwitch>
              <ChartPanel>
                <TableClip>
                  <DataTable>
                    <thead>
                      <tr>
                        <Th><ThInner>Username<Chevron size={12} /></ThInner></Th>
                        <Th><ThInner>Hostname<Chevron size={12} /></ThInner></Th>
                        <Th>
                          <ThInner>
                            <Line size={14} w={1.3} d="M8 2v12M2.500 8.500 8 14l5.500-5.500" />
                            <ThEnd>Count of records<Chevron size={12} /></ThEnd>
                          </ThInner>
                        </Th>
                      </tr>
                    </thead>
                    <tbody>
                      {rows.map(([u, h, n], i) => (
                        <tr key={i}><Td>{u}</Td><Td>{h}</Td><Td $num>{n}</Td></tr>
                      ))}
                    </tbody>
                  </DataTable>
                </TableClip>
                <Rail $pad="5px 0 4px"><Caret $dir="up" /><Thumb $size="369px" /><Caret $dir="down" /></Rail>
              </ChartPanel>
              <SuggestHead><Chevron size={14} />Suggestions</SuggestHead>
              <Suggestions>
                <Card $current><TableIcon width={40} />Current visualization</Card>
                <Card aria-label="Pie"><Pie /></Card>
                <Card aria-label="Bar"><Bars /></Card>
                <Card><Metric>96</Metric></Card>
              </Suggestions>
              <HRail><SideCaret $dir="left" /><SideCaret $dir="right" /></HRail>
            </Center>

            <ConfigWrap>
              <Config>
                <ConfigHead>
                  <ConfigTitle>
                    <TableIcon width={16} />Table
                    <Erase aria-label="Reset layer"><EraserIcon /></Erase>
                  </ConfigTitle>
                  <SelectBox $height={32}>
                    <Select aria-label="Layer data view"><option>windows*</option></Select>
                    <Chevron />
                  </SelectBox>
                </ConfigHead>
                {layers.map((l) => (
                  <Layer key={l.label}>
                    <LayerLabel>{l.label}{l.help && <Help><Question /></Help>}</LayerLabel>
                    {l.dims.map((d, i) => (
                      <Dimension key={d} $last={i === l.dims.length - 1}>
                        <LinkButton>{d}</LinkButton>
                        <RemoveButton aria-label={`Remove ${d}`}><Cross /></RemoveButton>
                      </Dimension>
                    ))}
                    <DropZone><Plus />Add or drag-and-drop a field</DropZone>
                  </Layer>
                ))}
              </Config>
            </ConfigWrap>
          </Body>
        </Kibana>
      </Browser>
    </Desktop>
  );
}
